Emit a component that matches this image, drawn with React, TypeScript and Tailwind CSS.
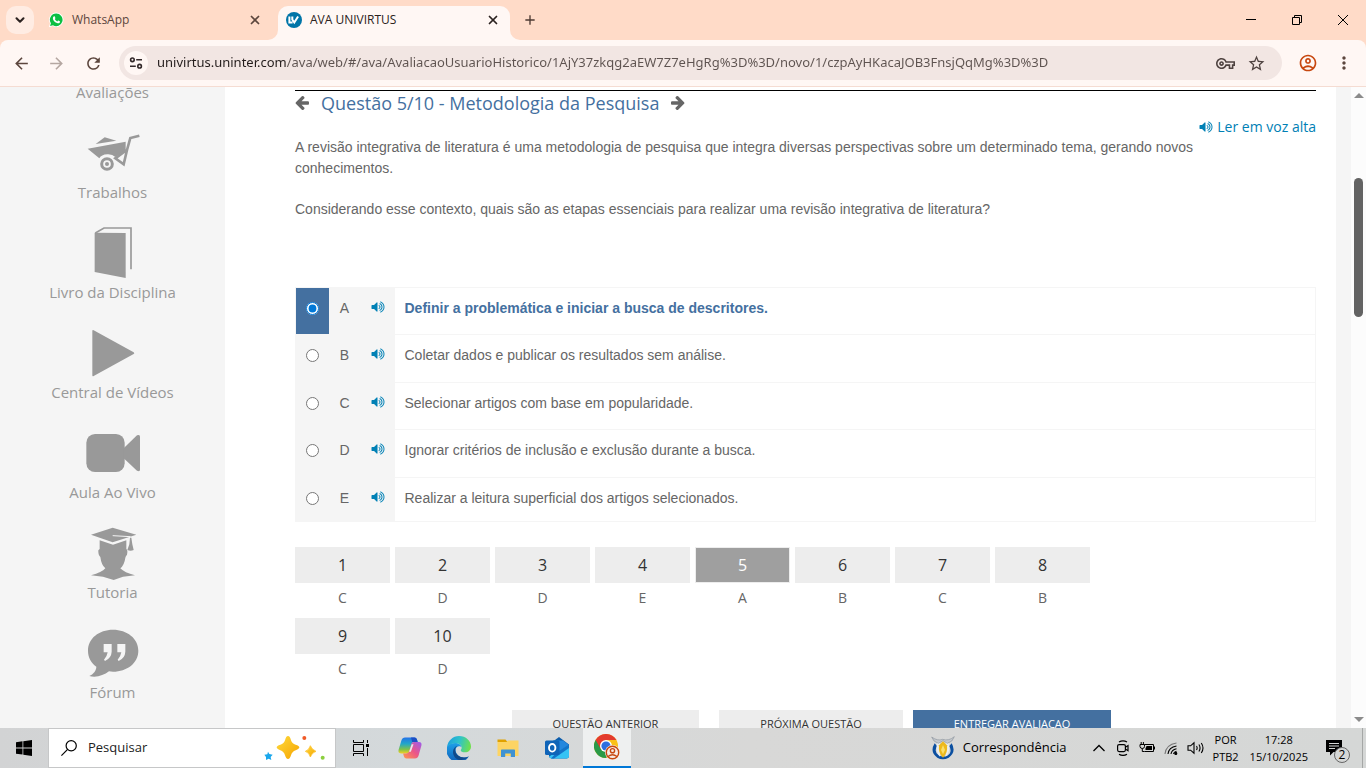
import React, { useState } from "react";
import {
    MdArrowBack,
    MdArrowForward,
    MdRefresh,
    MdStarOutline,
    MdOutlineVpnKey,
    MdOutlineAccountCircle,
    MdMoreVert,
    MdAdd,
} from "react-icons/md";
import { ChevronDown, X } from "lucide-react";

const pageUrl =
    "univirtus.uninter.com/ava/web/#/ava/AvaliacaoUsuarioHistorico/1AjY37zkqg2aEW7Z7eHgRg%3D%3D/novo/1/czpAyHKacaJOB3FnsjQqMg%3D%3D";

const options = [
    { letter: "A", text: "Definir a problemática e iniciar a busca de descritores." },
    { letter: "B", text: "Coletar dados e publicar os resultados sem análise." },
    { letter: "C", text: "Selecionar artigos com base em popularidade." },
    { letter: "D", text: "Ignorar critérios de inclusão e exclusão durante a busca." },
    { letter: "E", text: "Realizar a leitura superficial dos artigos selecionados." },
];

const answers = ["C", "D", "D", "E", "A", "B", "C", "B", "C", "D"];

export default function App() {
    return (
        <div className="flex h-screen flex-col overflow-hidden bg-white font-['Open_Sans',sans-serif]">
            <TabStrip />
            <Toolbar />
            <div className="flex min-h-0 flex-1 overflow-hidden">
                <Sidebar />
                <QuestionPage />
                <div className="w-[15px] shrink-0 bg-[#f5f5f5]" />
                <ScrollBar />
            </div>
            <TaskBar />
        </div>
    );
}

function TabStrip() {
    return (
        <header className="flex h-10 shrink-0 items-end bg-[#ffdbc8] pl-1.5 text-xs text-[#2b2220]">
            <button
                aria-label="Pesquisar guias"
                className="mb-1.5 flex size-7 items-center justify-center rounded-[10px] bg-[#ffece3]"
            >
                <ChevronDown className="size-3.5" strokeWidth={3.5} />
            </button>
            <div className="ml-3.5 flex h-[34px] w-[230px] items-center pb-1.5 pr-4 text-[#5c463d]">
                <WhatsAppLogo />
                <span className="ml-2 flex-1">WhatsApp</span>
                <button aria-label="Fechar WhatsApp">
                    <X className="size-3.5" strokeWidth={3} />
                </button>
            </div>
            <div className="relative flex h-[34px] w-[232px] items-center rounded-t-[10px] bg-[#fff7f4] pb-1.5 pl-2 pr-2.5">
                <TabFoot className="absolute -left-2.5 bottom-0 size-2.5" />
                <TabFoot className="absolute -right-2.5 bottom-0 size-2.5 -scale-x-100" />
                <UnivirtusLogo />
                <span className="ml-2 flex-1">AVA UNIVIRTUS</span>
                <button aria-label="Fechar AVA UNIVIRTUS">
                    <X className="size-3.5" strokeWidth={3} />
                </button>
            </div>
            <button aria-label="Nova guia" className="mb-3 ml-3 text-[#4d3a32]">
                <MdAdd className="size-4" />
            </button>
            <div className="ml-auto flex self-stretch text-black">
                <button aria-label="Minimizar" className="flex w-[46px] items-center justify-center">
                    <svg viewBox="0 0 10 10" className="size-2.5" stroke="currentColor">
                        <path d="M0 4.5h10" />
                    </svg>
                </button>
                <button aria-label="Restaurar" className="flex w-[46px] items-center justify-center">
                    <svg viewBox="0 0 10 10" className="size-2.5" fill="none" stroke="currentColor">
                        <path d="M.5 2.5h7v7h-7zM2.5 2.5v-2h7v7h-2" />
                    </svg>
                </button>
                <button aria-label="Fechar" className="flex w-[46px] items-center justify-center">
                    <svg viewBox="0 0 10 10" className="size-2.5" stroke="currentColor">
                        <path d="M0 0l10 10M10 0L0 10" />
                    </svg>
                </button>
            </div>
        </header>
    );
}

function TabFoot({ className }: { className: string }) {
    return (
        <svg viewBox="0 0 10 10" className={className} fill="#fff7f4">
            <path d="M10 0v10H0A10 10 0 0 0 10 0z" />
        </svg>
    );
}

function WhatsAppLogo() {
    return (
        <svg viewBox="0 0 16 16" className="size-4">
            <path d="M8.2.6a7.2 7.2 0 1 1-3.4 13.5L.9 15.2 2 11.4A7.2 7.2 0 0 1 8.2.6z" fill="#fff" />
            <path d="M8.2 1.5a6.3 6.3 0 1 1-3.2 11.7l-2.9.8.8-2.8A6.3 6.3 0 0 1 8.2 1.5z" fill="#0cbf42" />
            <path
                d="M5.7 4.5c.4-.4.9-.3 1.1.1l.6 1.3c.1.3-.4.9-.6 1.2.6 1.1 1.4 1.8 2.6 2.3.3-.3.7-1 1-.9l1.4.7c.3.2.2.8 0 1.2-.6.9-1.7 1.1-2.7.7-2-.8-3.2-2-4-3.7-.4-1.1-.2-2.2.6-2.9z"
                fill="#fff"
            />
        </svg>
    );
}

function UnivirtusLogo() {
    return (
        <svg viewBox="0 0 16 16" className="size-4" fill="none">
            <circle cx="8" cy="8" r="8" fill="#0075a8" />
            <path d="M3.4 4.5v6h3.2M6.3 4.5v3l2 3 3.8-6" stroke="#fff" strokeWidth="2" />
        </svg>
    );
}

function Toolbar() {
    return (
        <div className="shrink-0 bg-[#ffdbc8]">
            <div className="flex h-[47px] items-center rounded-t-lg border-b border-[#f5dcd2] bg-[#fff7f4] px-3 text-[#5c463d]">
                <button aria-label="Voltar">
                    <MdArrowBack className="size-[19px]" />
                </button>
                <button aria-label="Avançar" className="ml-4 text-[#b5a7a1]">
                    <MdArrowForward className="size-[19px]" />
                </button>
                <button aria-label="Recarregar" className="ml-[18px]">
                    <MdRefresh className="size-[19px]" />
                </button>
                <div className="ml-4 flex h-[34px] flex-1 items-center rounded-full bg-[#f2e6e3] pl-[5px] pr-4">
                    <button
                        aria-label="Ver informações do site"
                        className="flex size-6 shrink-0 items-center justify-center rounded-full bg-[#fff7f4] text-[#33292a]"
                    >
                        <svg viewBox="0 0 14 14" className="size-3.5" fill="none" stroke="currentColor" strokeWidth="1.6">
                            <circle cx="3.4" cy="3.8" r="1.8" />
                            <path d="M7.2 3.8H13M1 10.2h5.8" />
                            <circle cx="10.6" cy="10.2" r="1.8" />
                        </svg>
                    </button>
                    <input
                        aria-label="Barra de endereço"
                        defaultValue={pageUrl}
                        className="ml-[9px] min-w-0 flex-1 bg-[linear-gradient(90deg,#231c1b_130px,#5e5350_130px)] bg-clip-text font-['Noto_Sans',sans-serif] text-[13px] text-transparent caret-black outline-none"
                    />
                    <button aria-label="Senhas" className="text-[#4f4341]">
                        <MdOutlineVpnKey className="size-[19px]" />
                    </button>
                    <button aria-label="Adicionar aos favoritos" className="ml-3 text-[#4f4341]">
                        <MdStarOutline className="size-[19px]" />
                    </button>
                </div>
                <button aria-label="Perfil" className="ml-4 text-[#c7470f]">
                    <MdOutlineAccountCircle className="size-5" />
                </button>
                <button aria-label="Mais" className="ml-4">
                    <MdMoreVert className="size-5" />
                </button>
            </div>
        </div>
    );
}

const menuItems: { label: string; icon?: React.ReactNode }[] = [
    { label: "Avaliações" },
    {
        label: "Trabalhos",
        icon: (
            <svg viewBox="236 135 204 156" className="h-13 w-17" fill="#999">
                <path d="M262 203L376 182V209L345 228Q336 219 321 220Q303 221 297 232z" />
                <path d="M286 189L313 169L348 179z" />
                <circle cx="320" cy="249" r="16" fill="none" stroke="#999" strokeWidth="9" />
                <circle cx="320" cy="249" r="6" />
                <path
                    d="M417 164L390 171L380 207L370 250L345 232L379 207"
                    fill="none"
                    stroke="#999"
                    strokeWidth="8"
                />
            </svg>
        ),
    },
    {
        label: "Livro da Disciplina",
        icon: (
            <svg viewBox="236 435 204 156" className="h-13 w-17" fill="#999">
                <path d="M283 455L376 456V591L283 573z" />
                <path d="M285 456L311 441H392V565" fill="none" stroke="#999" strokeWidth="5" />
            </svg>
        ),
    },
    {
        label: "Central de Vídeos",
        icon: (
            <svg viewBox="236 735 204 156" className="h-13 w-17" fill="#999">
                <path d="M276 750Q276 746 280 748L400 814Q404 817 400 819L280 885Q276 887 276 883z" />
            </svg>
        ),
    },
    {
        label: "Aula Ao Vivo",
        icon: (
            <svg viewBox="236 75 204 156" className="h-13 w-17" fill="#999">
                <rect x="258" y="99" width="115" height="114" rx="26" />
                <path d="M370 142L410 103Q419 99 419 107V206Q419 213 410 209L370 172z" />
            </svg>
        ),
    },
    {
        label: "Tutoria",
        icon: (
            <svg viewBox="236 375 204 162" className="h-[54px] w-17" fill="#999">
                <path d="M272 401L337 380L408 401L337 424z" />
                <path d="M298 418L338 431L378 418V444Q383 447 380 461Q376 466 375 470Q372 492 360 502Q372 515 404 523L368 527L340 537L308 527L272 523Q305 514 315 502Q303 492 300 468Q293 462 294 448L298 444z" />
                <path d="M337 404L390 407V420" fill="none" stroke="#f5f5f5" strokeWidth="3" />
                <path d="M389 410H393L396 430L400 447Q391 452 381 447L387 430z" />
            </svg>
        ),
    },
    {
        label: "Fórum",
        icon: (
            <svg viewBox="236 675 204 156" className="h-13 w-17" fill="#999">
                <path d="M338 686C380 686 414 712 414 749C414 786 380 812 338 812L326 811C310 823 288 831 267 825C279 820 288 808 288 797C272 785 263 769 263 749C263 712 296 686 338 686z" />
                <path
                    d="M310 729H334V752Q333 771 314 780L311 776Q320 767 322 754H310zM351 729H375V752Q374 771 355 780L352 776Q361 767 363 754H351z"
                    fill="#f5f5f5"
                />
            </svg>
        ),
    },
];

function Sidebar() {
    return (
        <nav className="w-[225px] shrink-0 overflow-hidden bg-[#f5f5f5] text-[15px] leading-5 text-[#999]">
            <ul className="-mt-[5px]">
                {menuItems.map((item) => (
                    <li key={item.label}>
                        <a href="#" className="flex flex-col items-center">
                            {item.icon && (
                                <span className="mt-6 flex h-14 items-start justify-center">{item.icon}</span>
                            )}
                            {item.label}
                        </a>
                    </li>
                ))}
            </ul>
        </nav>
    );
}

function ArrowIcon({ className }: { className: string }) {
    return (
        <svg viewBox="0 -64 1536 1536" className={className} fill="currentColor">
            <path d="M1536 640v128q0 53-32.5 90.5t-84.5 37.5h-704l293 294q38 36 38 90t-38 90l-75 76q-37 37-90 37-52 0-91-37l-651-652q-37-37-37-90 0-52 37-91l651-650q38-38 91-38 52 0 90 38l75 74q38 38 38 91t-38 91l-293 293h704q52 0 84.5 37.5t32.5 90.5z" />
        </svg>
    );
}

function VolumeIcon() {
    return (
        <svg viewBox="0 0 1792 1792" className="size-3.5" fill="currentColor">
            <path d="M832 352v1088q0 26-19 45t-45 19-45-19l-333-333h-262q-26 0-45-19t-19-45v-384q0-26 19-45t45-19h262l333-333q19-19 45-19t45 19 19 45zm384 544q0 76-42.5 141.5t-112.5 93.5q-10 5-25 5-26 0-45-18.5t-19-45.500q0-21 12-35.500t29-25 34-23 29-36 12-56.500-12-56.500-29-36-34-23-29-25-12-35.500q0-27 19-45.500t45-18.500q15 0 25 5 70 27 112.500 93t42.500 142zm256 0q0 153-85 282.500t-225 188.500q-13 5-25 5-27 0-46-19t-19-45q0-39 39-59 56-29 76-44 74-54 115.500-135.500t41.500-173.500-41.500-173.500-115.500-135.500q-20-15-76-44-39-20-39-59 0-26 19-45t45-19q13 0 26 5 140 59 225 188.500t85 282.500zm256 0q0 230-127 422.500t-338 283.500q-13 5-26 5-26 0-45-19t-19-45q0-36 39-59 7-4 22.500-10.500t22.500-10.500q46-25 82-51 123-91 192-227t69-289-69-289-192-227q-36-26-82-51-7-4-22.500-10.500t-22.500-10.500q-39-23-39-59 0-26 19-45t45-19q13 0 26 5 211 91 338 283.500t127 422.500z" />
        </svg>
    );
}

function QuestionPage() {
    const [selected, setSelected] = useState("A");

    return (
        <main className="min-w-0 flex-1 overflow-hidden pl-[70px] pr-5 pt-[3px] text-[#666]">
            <div className="mb-0.5 flex h-6 items-center border-t border-black">
                <button aria-label="Questão anterior">
                    <ArrowIcon className="size-3.5 overflow-visible" />
                </button>
                <h1 className="mx-3 text-lg leading-6 text-[#4470a0]">
                    Questão 5/10 - Metodologia da Pesquisa
                </h1>
                <button aria-label="Próxima questão">
                    <ArrowIcon className="size-3.5 -scale-x-100 overflow-visible" />
                </button>
            </div>
            <a href="#" className="flex items-center justify-end gap-1 text-sm leading-[21px] text-[#0080b5]">
                <VolumeIcon />
                Ler em voz alta
            </a>
            <div className="pr-10 font-['Liberation_Sans',sans-serif] text-sm leading-[21px]">
                <p>
                    A revisão integrativa de literatura é uma metodologia de pesquisa que integra diversas
                    perspectivas sobre um determinado tema, gerando novos conhecimentos.
                </p>
                <p className="mt-5">
                    Considerando esse contexto, quais são as etapas essenciais para realizar uma revisão
                    integrativa de literatura?
                </p>
            </div>

            <table className="mt-[67px] w-full border-collapse border border-[#f5f5f5] font-['Liberation_Sans',sans-serif] text-sm leading-[21px]">
                <tbody>
                    {options.map((option) => {
                        const checked = selected === option.letter;
                        const id = `option-${option.letter}`;
                        return (
                            <tr
                                key={option.letter}
                                className="h-[47px] border-b border-[#f5f5f5] align-top last:h-11 even:h-12"
                            >
                                <td className={`w-[33px] pt-3.5 ${checked ? "bg-[#4470a0]" : "bg-[#f5f5f5]"}`}>
                                    <input
                                        type="radio"
                                        id={id}
                                        name="option"
                                        checked={checked}
                                        onChange={() => setSelected(option.letter)}
                                        className="mx-auto block size-[13px] accent-[#0078d7]"
                                    />
                                </td>
                                <td className="w-8 bg-[#f5f5f5] pt-2.5 text-center">{option.letter}</td>
                                <td className="w-[34px] bg-[#f5f5f5] pt-3">
                                    <button
                                        aria-label={`Ouvir alternativa ${option.letter}`}
                                        className="mx-auto block text-[#0080b5]"
                                    >
                                        <VolumeIcon />
                                    </button>
                                </td>
                                <td className={`pl-2.5 pt-2.5 ${checked ? "font-bold text-[#4470a0]" : ""}`}>
                                    <label htmlFor={id}>{option.text}</label>
                                </td>
                            </tr>
                        );
                    })}
                </tbody>
            </table>

            <ol className="mt-[25px] grid max-w-[795px] grid-cols-8 gap-[5px] text-center">
                {answers.map((answer, index) => (
                    <li key={index}>
                        <button
                            className={`block h-9 w-full border border-[#ededed] text-base ${
                                index === 4 ? "bg-[#9f9f9f] text-white" : "bg-[#ededed] text-[#333]"
                            }`}
                        >
                            {index + 1}
                        </button>
                        <span className="block text-sm leading-[30px]">{answer}</span>
                    </li>
                ))}
            </ol>

            <div className="mt-[26px] flex justify-center pl-3 text-[11px] leading-7 text-[#333]">
                <button className="bg-[#ededed] px-[41px]">QUESTÃO ANTERIOR</button>
                <button className="ml-5 bg-[#ededed] px-[41px]">PRÓXIMA QUESTÃO</button>
                <button className="ml-2.5 bg-[#4470a0] px-[41px] text-white">ENTREGAR AVALIACAO</button>
            </div>
        </main>
    );
}

function ScrollBar() {
    return (
        <div className="flex w-[15px] shrink-0 flex-col items-center bg-[#fcfcfc] py-1.5 text-[#8b8b8b]">
            <svg viewBox="0 0 10 5" className="h-[5px] w-2.5" fill="currentColor">
                <path d="M5 0l5 5H0z" />
            </svg>
            <div className="mt-20 h-[139px] w-[9px] rounded-full bg-[#636363]" />
            <svg viewBox="0 0 10 5" className="mt-auto h-[5px] w-2.5" fill="currentColor">
                <path d="M0 0h10L5 5z" />
            </svg>
        </div>
    );
}

function TaskButton({ label, children }: { label: string; children: React.ReactNode }) {
    return (
        <button aria-label={label} className="flex w-[49px] items-center justify-center">
            {children}
        </button>
    );
}

function TaskBar() {
    return (
        <footer className="flex h-10 shrink-0 items-stretch bg-[linear-gradient(90deg,#d2d3d4,#d4d9db_30%,#d8d8d7_55%,#d5d7d6)] text-black">
            <button aria-label="Iniciar" className="flex w-12 items-center justify-center">
                <svg viewBox="0 0 16 16" className="size-4">
                    <path d="M0 2.2l6.5-.9v6.2H0zM7.3 1.2L16 0v7.5H7.3zM0 8.4h6.5v6.2L0 13.7zM7.3 8.4H16V16l-8.7-1.2z" />
                </svg>
            </button>
            <label className="flex w-72 items-center border border-[#c6c7c8] bg-white pl-3 pr-2">
                <svg viewBox="0 0 16 16" className="size-4" fill="none" stroke="currentColor" strokeWidth="1.2">
                    <circle cx="10.2" cy="5.8" r="5.1" />
                    <path d="M6.6 9.4L.4 15.6" />
                </svg>
                <input
                    placeholder="Pesquisar"
                    aria-label="Pesquisar"
                    className="ml-[11px] w-0 flex-1 text-[13px] outline-none placeholder:text-[#222]"
                />
                <svg viewBox="790 102 192 84" className="h-7 w-16">
                    <defs>
                        <linearGradient id="star" x1="0" y1="0" x2="1" y2="1">
                            <stop offset="0" stopColor="#ffdb3d" />
                            <stop offset="1" stopColor="#f5a300" />
                        </linearGradient>
                    </defs>
                    <path
                        d="M865 108Q871 108 874 121Q877 131 888 134Q899 137 899 142Q899 147 888 151Q877 155 874 166Q871 177 865 177Q859 177 856 166Q853 155 842 151Q831 147 831 142Q831 137 842 134Q853 131 856 121Q859 108 865 108z"
                        fill="url(#star)"
                    />
                    <path
                        d="M932 137Q936 148 949 154Q937 158 932 171Q929 158 917 154Q929 149 932 137z"
                        fill="url(#star)"
                        stroke="#fdb913"
                        strokeWidth="2"
                    />
                    <path d="M805 155l4 7 10 2-6 7 2 9-8-4-8 4v-9l-5-7 9-1z" fill="#1aa7ec" />
                    <circle cx="914" cy="114" r="6" fill="#f05a28" />
                    <circle cx="969" cy="173" r="6" fill="#8ccf3f" />
                </svg>
            </label>
            <TaskButton label="Visão de tarefas">
                <svg viewBox="0 0 16 16" className="size-4" fill="none" stroke="currentColor">
                    <path d="M.5 4.5h10v7H.5zM.5 0v2.5h10V0M.5 16v-2.5h10V16M14.5 0v3M14.5 8v8" />
                    <path d="M13 4h3v3h-3z" fill="currentColor" stroke="none" />
                </svg>
            </TaskButton>
            <TaskButton label="Copilot">
                <svg viewBox="0 0 24 24" className="size-6">
                    <defs>
                        <linearGradient id="cop1" x1="0" y1="0" x2="0" y2="1">
                            <stop offset="0" stopColor="#2472e8" />
                            <stop offset=".4" stopColor="#22a7c9" />
                            <stop offset=".75" stopColor="#7fc24a" />
                            <stop offset="1" stopColor="#f3cf24" />
                        </linearGradient>
                        <linearGradient id="cop2" x1="1" y1="0" x2="0" y2="1">
                            <stop offset="0" stopColor="#9a5cf0" />
                            <stop offset=".5" stopColor="#ec5587" />
                            <stop offset="1" stopColor="#ff9a4a" />
                        </linearGradient>
                    </defs>
                    <path
                        d="M7 1.5h9.5c1.5 0 2.2 1 2.6 2.5l.6 2h-3.2c-1.6 0-2.4.8-2.9 2.4l-2 6.6c-.5 1.6-1.4 2.4-3 2.4H3c-2 0-3-1.4-2.4-3.6L3.4 4.5C4 2.5 5.2 1.5 7 1.5z"
                        fill="url(#cop1)"
                    />
                    <path d="M13 1.5h3.5c1.5 0 2.2 1 2.6 2.5l.6 2h-5.5z" fill="#1c4fc4" />
                    <path
                        d="M17 22.5H8.5c-1.6 0-2.3-1-2.7-2.5l-.7-2.5h3c1.8 0 2.6-.8 3.1-2.4l2-6.7C13.7 6.8 14.6 6 16.2 6H21c2 0 3 1.4 2.4 3.6l-2.8 9.9c-.6 2-1.8 3-3.6 3z"
                        fill="url(#cop2)"
                    />
                    <path d="M13.7 8.2h1.8l-2.6 7.6H11z" fill="#e6eaec" />
                </svg>
            </TaskButton>
            <TaskButton label="Edge">
                <svg viewBox="0 0 24 24" className="size-6">
                    <defs>
                        <linearGradient id="edge1" x1="0" y1=".3" x2="1" y2=".5">
                            <stop offset="0" stopColor="#1b9fe0" />
                            <stop offset=".5" stopColor="#2fc3c9" />
                            <stop offset="1" stopColor="#6fe04c" />
                        </linearGradient>
                        <linearGradient id="edge2" x1="0" y1="0" x2="0" y2="1">
                            <stop offset="0" stopColor="#1da0e8" />
                            <stop offset="1" stopColor="#1160b8" />
                        </linearGradient>
                    </defs>
                    <path
                        d="M.1 10.5C1.5 8.5 4.5 7 8 7c3.5 0 6.5 2 6.7 4.5-1.5-2-6.1-1.5-6.1 2.5 0 4.5 4 7.5 8.5 7.5 1.7 0 3.3-.5 4.7-1.1A12 12 0 0 1 .1 10.5z"
                        fill="url(#edge2)"
                    />
                    <path
                        d="M.1 11C.8 4.7 6 0 12 0c7 0 12 5 12 10.5 0 3.5-2.6 5.8-6 5.8-2.6 0-4.2-1-4.2-1.9 0-.6.9-1 .9-2.8C14.7 9 12 7.2 8.7 7.2 4.5 7.2 1.4 9 .1 11z"
                        fill="url(#edge1)"
                    />
                    <path
                        d="M10.6 9.5c-1.8 1.3-2.6 3-2.3 5.2.6 4 4.3 6.5 8.2 6.7 2.5 0 4-.3 5.5-1.2A12 12 0 0 1 12 24c-3.7-1-6-4.5-6-8 0-3.2 2-5.5 4.6-6.5z"
                        fill="#114a8b"
                    />
                </svg>
            </TaskButton>
            <TaskButton label="Explorador de Arquivos">
                <svg viewBox="0 0 24 24" className="size-6">
                    <path d="M1.5 3.5h8l2 2.5h-10z" fill="#e0a200" />
                    <path d="M1.5 6h9L12 4.5h10.5V20h-21z" fill="#fdd463" />
                    <path d="M5 21v-6.5c0-.6.4-1 1-1h12c.6 0 1 .4 1 1V21h-4.2v-3.5H9.2V21z" fill="#3f92d2" />
                </svg>
            </TaskButton>
            <TaskButton label="Outlook">
                <svg viewBox="0 0 24 24" className="size-6">
                    <path d="M4 8.5L14 1l10 7.5V20c0 1.5-1 2.5-2.5 2.5H7c-1.7 0-3-1-3-2.5z" fill="#0b5cab" />
                    <path d="M8 4.5h10L24 9l-9 6H8z" fill="#2387de" />
                    <path d="M24 9v11c0 1.5-1 2.5-2.5 2.5H7c-1.5 0-2.5-.8-3-2z" fill="#35c3f5" />
                    <path d="M12 16L24 8.5V12L9 22.5H6z" fill="#1273c9" />
                    <rect y="4.5" width="14.5" height="14.5" rx="1.5" fill="#0f64b8" />
                    <ellipse cx="7.2" cy="11.8" rx="3.2" ry="3.8" fill="none" stroke="#fff" strokeWidth="1.9" />
                </svg>
            </TaskButton>
            <button
                aria-label="Google Chrome"
                className="ml-0.5 flex w-12 items-center justify-center border-b-2 border-[#0078d7] bg-[#eef0f0]"
            >
                <svg viewBox="0 0 26 26" className="size-[26px]">
                    <circle cx="12" cy="12" r="12" fill="#fbc116" />
                    <path d="M12 12L1.6 6A12 12 0 0 0 12 24l5.2-9z" fill="#2a9a48" />
                    <path d="M12 6h10.4a12 12 0 0 0-20.8 0l5.2 9z" fill="#e33b2e" />
                    <circle cx="12" cy="12" r="6" fill="#fff" />
                    <circle cx="12" cy="12" r="4.6" fill="#2d6fe0" />
                    <circle cx="18.5" cy="18.5" r="7.5" fill="#f8ece6" />
                    <g fill="none" stroke="#c7470f" strokeWidth="1.4">
                        <circle cx="18.5" cy="18.5" r="6.2" />
                        <circle cx="18.5" cy="16.7" r="2.1" />
                        <path d="M14 22.5q4.5-3.5 9 0" />
                    </g>
                </svg>
            </button>

            <div className="ml-auto flex items-center">
                <button className="flex items-center gap-2 text-[13px]">
                    <svg viewBox="124 138 70 72" className="size-6">
                        <path
                            d="M134 160Q118 186 142 203Q158 212 176 203Q200 186 185 160L178 168Q188 188 172 197Q158 203 146 196Q131 186 141 168z"
                            fill="#0b4fa0"
                        />
                        <path d="M141 160L150 155V200Q136 188 141 160zM176 160L167 155V200Q182 188 176 160z" fill="#e9eef2" />
                        <path
                            d="M125 141Q143 154 158 148Q176 154 193 140Q188 156 172 160L159 152L145 160Q130 156 125 141z"
                            fill="#c3c8ce"
                            stroke="#8f979f"
                            strokeWidth="2"
                        />
                        <path d="M159 154L171 166Q174 190 159 203Q144 190 147 166z" fill="#edb91c" />
                        <path d="M159 165L165 180L159 193L153 180z" fill="#fbe06a" />
                    </svg>
                    Correspondência
                </button>
                <div className="ml-6 flex items-center gap-2">
                    <button aria-label="Mostrar ícones ocultos">
                        <svg viewBox="0 0 16 16" className="size-4" fill="none" stroke="currentColor" strokeWidth="1.3">
                            <path d="M2.5 11L8 5.5l5.5 5.5" />
                        </svg>
                    </button>
                    <svg viewBox="0 0 16 16" className="size-4" fill="none" stroke="currentColor" strokeWidth="1.2">
                        <rect x="2.6" y="4.6" width="7.8" height="7" rx="1.5" />
                        <path d="M10.4 7.2l2.6-1.7v5.2l-2.6-1.7M4 2Q8 -.4 12 2M4 14.2q4 2.4 8 0" />
                    </svg>
                    <svg viewBox="0 0 16 16" className="size-4" fill="none" stroke="currentColor">
                        <path d="M5.5 4.5h9v7h-9M15.5 6.5v3" />
                        <path d="M7.5 6H13v4H6.5V8.5z" fill="currentColor" stroke="none" />
                        <path d="M1 4.5h4.5v2q0 2-2.2 2T1 6.5zM2.2 2v2.5M4.4 2v2.5M3.3 8.5v3h2.2" />
                    </svg>
                    <svg viewBox="0 0 16 16" className="size-4" fill="none" stroke="currentColor" strokeWidth="1.1">
                        <path d="M2 14Q3 4.5 13.5 3" stroke="#777" />
                        <path d="M5 14q.7-6.7 8.5-8M8 14q.5-4.3 5.5-5.3M10.5 14q.3-2 3-2.7" />
                        <circle cx="12.8" cy="13.4" r="1" fill="currentColor" />
                    </svg>
                    <svg viewBox="0 0 18 16" className="h-4 w-[18px]" fill="none" stroke="currentColor" strokeWidth="1.1">
                        <path d="M1 5.8h2.6L7 2.8v10.4l-3.4-3H1zM9.5 6q1.3 2 0 4M11.9 4.5q2.3 3.5 0 7M14.3 3q3.4 5 0 10" />
                    </svg>
                </div>
                <div className="ml-2 text-center text-[11px] leading-[17px]">
                    <div>POR</div>
                    <div>PTB2</div>
                </div>
                <div className="ml-[11px] text-center text-[11px] leading-[17px]">
                    <div>17:28</div>
                    <div>15/10/2025</div>
                </div>
                <button aria-label="Notificações" className="relative ml-[18px] mr-2.5">
                    <svg viewBox="0 0 26 32" className="h-8 w-[26px]">
                        <path d="M0 8h16v12H7.5L4 23.5V20H0z" />
                        <path d="M3 11.5h10M3 14h10M3 16.5h6" stroke="#d5d7d6" />
                        <circle cx="16" cy="23" r="7.5" fill="#d5d7d6" stroke="#666" />
                    </svg>
                    <span className="absolute bottom-px left-3 w-2 text-center text-xs leading-4">2</span>
                </button>
                <div className="h-10 w-1 border-l border-[#a5a7a6]" />
            </div>
        </footer>
    );
}
